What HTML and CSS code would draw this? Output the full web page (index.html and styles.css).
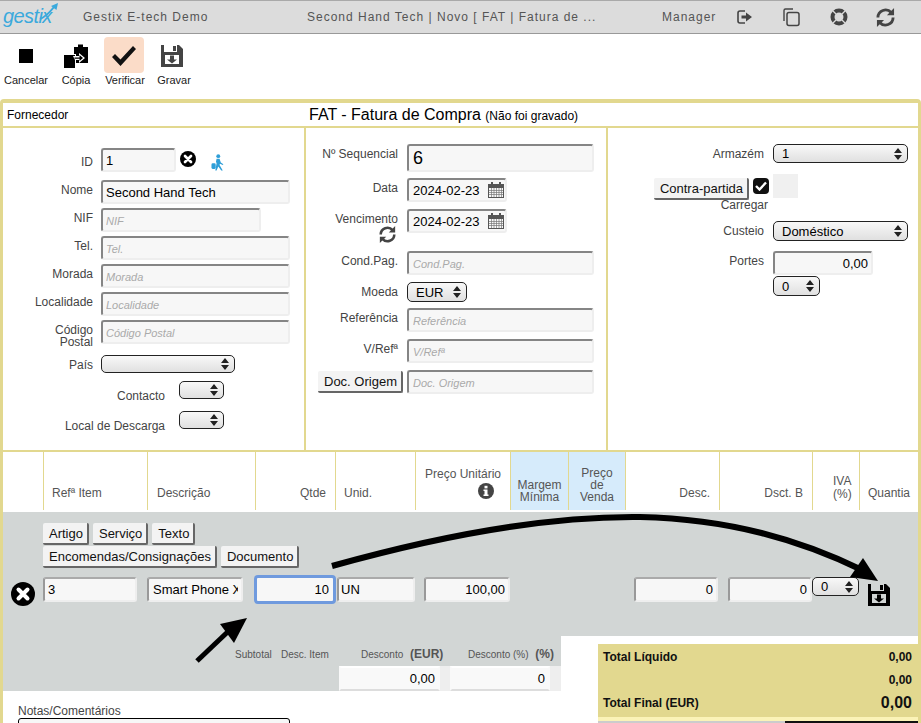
FILE: index.html
```html
<!DOCTYPE html>
<html lang="en">
<head>
    <meta charset="UTF-8">
    <meta name="viewport" content="width=device-width, initial-scale=1.0">
    <title>Gestix E-tech Demo</title>
    <link rel="stylesheet" href="styles.css">
</head>
<body>

    <svg class="defs" width="0" height="0">
        <symbol id="disk" viewBox="0 0 22 22">
            <path fill-rule="evenodd" d="M0 0H3V7H16V0H18L22 4V22H0ZM12 1H15V6H12ZM4 10V19H18V10ZM9 10.5H13V14.5H16L11 18.5L6 14.5H9Z"/>
        </symbol>
        <symbol id="cross" viewBox="0 0 24 24">
            <circle cx="12" cy="12" r="12"/>
            <path d="M7.5 7.5L16.5 16.5M16.5 7.5L7.5 16.5" stroke="#fff" stroke-width="4" stroke-linecap="round"/>
        </symbol>
        <symbol id="sync" viewBox="2 2 20 20">
            <path d="M4 12A8 8 0 0 1 18 6.8M20 12A8 8 0 0 1 6 17.2" fill="none" stroke="currentColor" stroke-width="3"/>
            <path d="M21 2V9.5H13.5ZM3 22V14.5H10.5Z" fill="currentColor"/>
        </symbol>
    </svg>

    <header class="topbar">
        <div class="logo">
            <span class="logo-text">gestix</span>
            <svg class="logo-arrow" width="20" height="18" viewBox="0 0 20 18"><path d="M1 16C6 14 11 9 15 4" fill="none" stroke="#3aa9dc" stroke-width="2"/><path d="M19 0L17.5 7L12 3Z" fill="#3aa9dc"/></svg>
        </div>
        <div class="company">Gestix E-tech Demo</div>
        <div class="doc-title">Second Hand Tech | Novo [ FAT | Fatura de ...</div>
        <div class="user">Manager</div>
        <div class="top-icons">
            <svg width="18" height="18" viewBox="0 0 18 18"><path d="M9 3H4Q2 3 2 5V13Q2 15 4 15H9" fill="none" stroke="#444" stroke-width="1.6"/><path d="M5.5 7.5H10V4.5L16 9L10 13.5V10.5H5.5Z" fill="#444"/></svg>
            <svg width="20" height="20" viewBox="0 0 20 20"><path d="M3 14V3.5Q3 2 4.500 2H12" fill="none" stroke="#444" stroke-width="1.4"/><rect x="6" y="5.500" width="12" height="13" rx="2" fill="none" stroke="#444" stroke-width="1.5"/></svg>
            <svg class="top-ring" width="20" height="20" viewBox="0 0 20 20"><circle cx="10" cy="10" r="6.500" fill="none" stroke="#444" stroke-width="4"/><path d="M3 3L7 7M17 3L13 7M3 17L7 13M17 17L13 13" stroke="#dcdcdc" stroke-width="1.300"/></svg>
            <svg class="top-sync" width="19" height="19"><use href="#sync"/></svg>
        </div>
    </header>

    <div class="toolbar">
        <div class="tool">
            <div class="tool-icon"><span class="stop"></span></div>
            <span>Cancelar</span>
        </div>
        <div class="tool">
            <div class="tool-icon">
                <svg width="24" height="24" viewBox="0 0 24 24"><path d="M10 3H14V0.500H19V3H24V19H12V10H10Z"/><path d="M0 11H11V24H0Z"/><path d="M9 12H15V9L21 14L15 19V16H11" fill="#fff"/><path d="M10.500 13.500H15.500V11L19 14L15.500 17V14.800H10.500Z"/></svg>
            </div>
            <span>Cópia</span>
        </div>
        <div class="tool">
            <div class="tool-icon active">
                <svg width="26" height="22" viewBox="0 0 26 22"><path d="M1 12L4 9L9.500 14.500L22 1L25 4L9.500 21Z" fill="#111"/></svg>
            </div>
            <span>Verificar</span>
        </div>
        <div class="tool">
            <div class="tool-icon"><svg class="disk-gray" width="22" height="22"><use href="#disk"/></svg></div>
            <span>Gravar</span>
        </div>
    </div>

    <main class="card">
        <div class="card-head">
            <span class="supplier-title">Fornecedor</span>
            <span class="doc-name">FAT - Fatura de Compra <small>(Não foi gravado)</small></span>
        </div>

        <div class="columns">
            <section class="col col-left">
                <div class="field field-id">
                    <label>ID</label>
                    <input class="w75" type="text" value="1">
                    <svg class="id-cross" width="16" height="16"><use href="#cross"/></svg>
                    <svg class="walker" width="14" height="17" viewBox="0 0 16 20"><circle cx="9.500" cy="2.500" r="2.300" fill="#2f9fd8"/><path d="M7.500 5.500H11L12.500 10L15.500 12L14.800 13L11.500 11.500L11 13L14.800 19.500H13L9.500 14.800L7.500 19.500H6L7.500 11L6.800 9Z" fill="#2f9fd8"/><rect x="1.500" y="11" width="5" height="6.500" rx="1.500" fill="#2f9fd8"/></svg>
                </div>
                <div class="field gap8"><label>Nome</label><input class="w189" type="text" value="Second Hand Tech"></div>
                <div class="field"><label>NIF</label><input class="w160" type="text" placeholder="NIF"></div>
                <div class="field"><label>Tel.</label><input class="w189" type="text" placeholder="Tel."></div>
                <div class="field"><label>Morada</label><input class="w189" type="text" placeholder="Morada"></div>
                <div class="field"><label>Localidade</label><input class="w189" type="text" placeholder="Localidade"></div>
                <div class="field"><label class="two-lines">Código Postal</label><input class="w189" type="text" placeholder="Código Postal"></div>
                <div class="field gap7"><label class="mid">País</label><select class="sel-pais"><option></option></select></div>
                <div class="field contact-row"><label>Contacto</label><select class="sel-small"><option></option></select></div>
                <div class="field contact-row discharge"><label>Local de Descarga</label><select class="sel-small"><option></option></select></div>
            </section>

            <section class="col col-mid">
                <div class="field seq-row"><label>Nº Sequencial</label><input class="w187 big" type="text" value="6"></div>
                <div class="field gap6"><label>Data</label><input class="w100 date" type="text" value="2024-02-23"></div>
                <div class="field gap7">
                    <label>Vencimento
                        <svg class="venc-sync" width="17" height="17"><use href="#sync"/></svg>
                    </label>
                    <input class="w100 date" type="text" value="2024-02-23">
                </div>
                <div class="field gap8"><label>Cond.Pag.</label><input class="w187" type="text" placeholder="Cond.Pag."></div>
                <div class="field gap7"><label class="mid">Moeda</label><select class="sel-moeda"><option>EUR</option></select></div>
                <div class="field gap6"><label>Referência</label><input class="w187" type="text" placeholder="Referência"></div>
                <div class="field gap7"><label>V/Refª</label><input class="w187" type="text" placeholder="V/Refª"></div>
                <div class="field gap7 doc-row"><button class="btn">Doc. Origem</button><input class="w187" type="text" placeholder="Doc. Origem"></div>
            </section>

            <section class="col col-right">
                <div class="field"><label class="mid">Armazém</label><select class="sel-wide"><option>1</option></select></div>
                <div class="contra">
                    <div class="contra-left">
                        <div class="contra-top">
                            <button class="btn">Contra-partida</button>
                            <span class="check"><svg width="12" height="10" viewBox="0 0 12 10"><path d="M1 5L4.500 8.500L11 1.500" fill="none" stroke="#fff" stroke-width="2.400"/></svg></span>
                        </div>
                        <span class="carregar">Carregar</span>
                    </div>
                    <span class="swatch"></span>
                </div>
                <div class="field custeio"><label class="mid">Custeio</label><select class="sel-wide"><option>Doméstico</option></select></div>
                <div class="field gap10"><label>Portes</label><input class="w100 num" type="text" value="0,00"></div>
                <div class="field portes-sel"><select class="sel-tax"><option>0</option></select></div>
            </section>
        </div>

        <div class="line-head">
            <div class="th"></div>
            <div class="th ref">Refª Item</div>
            <div class="th">Descrição</div>
            <div class="th right">Qtde</div>
            <div class="th">Unid.</div>
            <div class="th center">Preço Unitário
                <svg class="info" width="16" height="16" viewBox="0 0 16 16"><circle cx="8" cy="8" r="8" fill="#444"/><rect x="6.500" y="2.800" width="3" height="2.600" fill="#fff"/><path d="M5.500 6.500H9.500V11.500H10.500V13H5.500V11.500H6.500V8H5.500Z" fill="#fff"/></svg>
            </div>
            <div class="th center blue">Margem Mínima</div>
            <div class="th center blue">Preço de Venda</div>
            <div class="th right">Desc.</div>
            <div class="th right">Dsct. B</div>
            <div class="th right tight">IVA (%)</div>
            <div class="th">Quantia</div>
        </div>

        <div class="line-edit">
            <div class="tabs">
                <button class="btn">Artigo</button>
                <button class="btn">Serviço</button>
                <button class="btn">Texto</button>
            </div>
            <div class="tabs">
                <button class="btn">Encomendas/Consignações</button>
                <button class="btn">Documento</button>
            </div>
            <div class="line-row">
                <svg class="line-cross" width="24" height="24"><use href="#cross"/></svg>
                <input class="cell c-ref" type="text" value="3">
                <input class="cell c-desc" type="text" value="Smart Phone XS">
                <input class="cell c-qty num focus" type="text" value="10">
                <input class="cell c-unit" type="text" value="UN">
                <input class="cell c-price num" type="text" value="100,00">
                <input class="cell c-disc num" type="text" value="0">
                <input class="cell c-disc2 num" type="text" value="0">
                <select class="sel-tax c-tax"><option>0</option></select>
                <svg class="line-save" width="22" height="22"><use href="#disk"/></svg>
            </div>
        </div>

        <div class="foot">
            <div class="foot-left">
                <div class="subtotals">
                    <div class="sub-labels">
                        <span class="s-sub">Subtotal</span>
                        <span class="s-item">Desc. Item</span>
                        <span class="s-eur">Desconto <b>(EUR)</b></span>
                        <span class="s-pct">Desconto (%) <b>(%)</b></span>
                    </div>
                    <div class="sub-inputs">
                        <div class="sub-box"><input class="cell num" type="text" value="0,00"></div>
                        <div class="sub-box"><input class="cell num" type="text" value="0"></div>
                    </div>
                </div>
                <div class="notes">
                    <label>Notas/Comentários</label>
                    <textarea></textarea>
                </div>
            </div>
            <div class="foot-right">
                <div class="totals">
                    <div class="total-row"><span>Total Líquido</span><span>0,00</span></div>
                    <div class="total-row"><span></span><span>0,00</span></div>
                    <div class="total-row final"><span>Total Final (EUR)</span><span class="grand">0,00</span></div>
                </div>
                <div class="totals-strip"></div>
                <div class="totals-under"><span></span></div>
            </div>
        </div>
    </main>

    <!-- arrows drawn over the screenshot -->
    <svg class="arrows" width="921" height="723" viewBox="0 0 921 723">
        <path d="M332 566C450 533 555 516 640 517C730 519 800 540 862 570" fill="none" stroke="#000" stroke-width="6"/>
        <path d="M863 558L878 581L850 577Z"/>
        <path d="M197 661L236 624" fill="none" stroke="#000" stroke-width="5"/>
        <path d="M247 618L220 624L234 643Z"/>
    </svg>

</body>
</html>
```

FILE: styles.css
```css
* {
    box-sizing: border-box;
}
html, body {
    margin: 0;
    height: 723px;
    overflow: hidden;
}
body {
    position: relative;
    font-family: "Liberation Sans", Arial, sans-serif;
    font-size: 12px;
    color: #444;
    background-color: #fff;
}
.defs {
    position: absolute;
}
.arrows {
    position: absolute;
    left: 0;
    top: 0;
    pointer-events: none;
}

/* top bar */
.topbar {
    display: flex;
    align-items: center;
    height: 34px;
    background-color: #dcdcdc;
    border-top: 1px solid #a9a9a9;
    border-bottom: 1px solid #999;
    letter-spacing: 1px;
    color: #555;
}
.logo {
    position: relative;
    width: 83px;
    padding-left: 3px;
    margin-top: -2px;
}
.logo-text {
    font-size: 20px;
    font-style: italic;
    letter-spacing: -0.6px;
    color: #3aa9dc;
}
.logo-arrow {
    position: absolute;
    left: 39px;
    top: -2px;
}
.company {
    width: 224px;
}
.doc-title {
    width: 355px;
}
.user {
    width: 72px;
}
.top-icons {
    display: flex;
    align-items: center;
    gap: 27px;
    padding-left: 2px;
}
.top-ring {
    margin-left: 1px;
}
.top-sync {
    color: #444;
}

/* toolbar */
.toolbar {
    display: flex;
    gap: 8px;
    height: 65px;
    padding: 3px 0 0 4px;
}
.tool {
    width: 40px;
    font-size: 11px;
    color: #222;
    text-align: center;
    display: flex;
    flex-direction: column;
    align-items: center;
    white-space: nowrap;
}
.tool:first-child {
    width: 44px;
}
.tool:nth-child(3) span {
    margin-left: 2px;
}
.tool:nth-child(4) span {
    margin-left: 4px;
}
.tool-icon {
    display: flex;
    align-items: center;
    justify-content: center;
    width: 40px;
    height: 36px;
    margin-bottom: 1px;
    border-radius: 4px;
    padding-top: 1px;
}
.tool-icon + span {
    line-height: 13px;
}
.tool-icon.active {
    background-color: #fbdcc8;
}
.stop {
    display: block;
    width: 14px;
    height: 14px;
    margin-top: 1px;
    background-color: #000;
}
.disk-gray {
    color: #444;
    fill: #444;
}

/* card */
.card {
    height: 624px;
    overflow: hidden;
    border: 3px solid #e2d88f;
    border-top-width: 4px;
    border-bottom: none;
    border-radius: 4px 4px 0 0;
}
.card-head {
    display: flex;
    align-items: center;
    height: 25px;
    border-bottom: 2px solid #e2d88f;
    color: #000;
}
.supplier-title {
    width: 306px;
    padding-left: 4px;
}
.doc-name {
    font-size: 16px;
}
.doc-name small {
    font-size: 12px;
}

.columns {
    display: grid;
    grid-template-columns: 303px 302px 310px;
    height: 324px;
    border-bottom: 2px solid #e2d88f;
}
.col {
    border-right: 2px solid #e2d88f;
}
.col-left {
    padding-top: 20px;
}
.col-mid {
    padding-top: 16px;
}
.col-right {
    padding-top: 16px;
    border-right: none;
}

.field {
    display: flex;
    align-items: flex-start;
    gap: 8px;
    margin-top: 4px;
}
.field:first-child {
    margin-top: 0;
}
.field label {
    flex: none;
    width: 90px;
    padding-top: 3px;
    line-height: 14px;
    text-align: right;
}
.field label.two-lines {
    padding: 4px 0 0 45px;
    line-height: 12px;
}
.field-id label {
    padding-top: 7px;
}
.col-mid .field {
    gap: 9px;
}
.col-mid .field label {
    width: 92px;
}
.col-mid input[type="text"] {
    padding-left: 4px;
}
.col-right .field {
    gap: 9px;
}
.col-right .field label {
    width: 156px;
}
.gap6 { margin-top: 6px; }
.gap7 { margin-top: 7px; }
.gap8 { margin-top: 8px; }
.gap10 { margin-top: 10px; }

input[type="text"] {
    height: 24px;
    padding: 0 3px;
    font-family: inherit;
    font-size: 13px;
    color: #000;
    background-color: #f7f7f7;
    border: 2px solid;
    border-color: #858585 #eee #eee #858585;
    border-radius: 3px;
    outline: none;
}
input::placeholder {
    font-size: 11px;
    font-style: italic;
    color: #aaa;
}
.w75 { width: 75px; }
.w100 { width: 100px; }
.w160 { width: 160px; }
.w187 { width: 187px; }
.w189 { width: 189px; }
input.big {
    height: 28px;
    font-size: 18px;
}
input.num {
    text-align: right;
}
input.date {
    background-image: url("data:image/svg+xml,%3Csvg xmlns='http://www.w3.org/2000/svg' width='16' height='16' viewBox='0 0 16 16'%3E%3Cpath fill='%23555' fill-rule='evenodd' d='M3 0H5V2H11V0H13V2H16V16H0V2H3ZM1 6V15H15V6Z'/%3E%3Cpath stroke='%23777' stroke-width='.7' d='M1 8.500H15M1 10.500H15M1 12.500H15M3.500 6V15M6 6V15M8.500 6V15M11 6V15M13.500 6V15'/%3E%3C/svg%3E");
    background-repeat: no-repeat;
    background-position: right 1px center;
}
select {
    height: 19px;
    padding: 0 0 0 8px;
    font-family: inherit;
    font-size: 13px;
    color: #000;
    appearance: none;
    -webkit-appearance: none;
    border: 1px solid #222;
    border-radius: 5px;
    background-color: #eee;
    background-image: url("data:image/svg+xml,%3Csvg xmlns='http://www.w3.org/2000/svg' width='8' height='12' viewBox='0 0 8 12'%3E%3Cpath fill='%23222' d='M4 0L8 5H0ZM4 12L0 7H8Z'/%3E%3C/svg%3E"), linear-gradient(#f8f8f8, #e0e0e0);
    background-repeat: no-repeat;
    background-position: right 5px center, 0 0;
}
.sel-pais { width: 134px; height: 18px; }
.sel-small { width: 45px; height: 18px; }
.sel-moeda { width: 60px; height: 20px; }
.sel-wide { width: 135px; }
.sel-tax { width: 47px; height: 20px; }
.custeio select {
    height: 20px;
}

.id-cross {
    margin: 3px 0 0 -4px;
}
.walker {
    margin: 6px 0 0 6px;
}
.contact-row {
    margin-top: 8px;
    gap: 14px;
}
.field.contact-row label {
    width: 162px;
    padding-top: 8px;
}
.contact-row.discharge {
    margin-top: 8px;
}
.venc-sync {
    display: block;
    margin: 0 0 0 auto;
    color: #444;
    position: relative;
    left: -2px;
}

.btn {
    height: 22px;
    padding: 0 4px 0 6px;
    font-family: inherit;
    font-size: 13px;
    color: #111;
    background-color: #f3f3f3;
    border: none;
    border-right: 2px solid #666;
    border-bottom: 2px solid #666;
    border-radius: 2px;
}
.doc-row {
    align-items: center;
    padding-left: 12px;
}
.col-mid .doc-row.field {
    gap: 4px;
}

.contra {
    display: flex;
    gap: 4px;
    margin-top: 11px;
}
.contra-left {
    display: flex;
    flex-direction: column;
    align-items: flex-end;
    width: 161px;
}
.contra-top {
    display: flex;
    gap: 4px;
    margin-top: 4px;
}
.check {
    display: flex;
    align-items: center;
    justify-content: center;
    width: 16px;
    height: 16px;
    background-color: #111;
    border-radius: 4px;
}
.carregar {
    line-height: 14px;
    margin: -2px 1px 0 0;
}
.swatch {
    width: 25px;
    height: 24px;
    background-color: #f0f0f0;
}
.custeio {
    margin-top: 9px;
}
.portes-sel {
    margin-top: 1px;
    padding-left: 165px;
}

/* lines table */
.line-head {
    display: grid;
    grid-template-columns: 40px 104px 108px 80px 80px 95px 58px 57px 94px 93px 47px 59px;
    height: 60px;
    padding-bottom: 2px;
}
.th {
    display: flex;
    flex-direction: column;
    justify-content: flex-end;
    padding: 0 9px 11px 8px;
    line-height: 12px;
    border-left: 1px solid #e2d88f;
    color: #555;
}
.th:first-child {
    border-left: none;
}
.th:nth-child(3) {
    padding-left: 9px;
}
.th.right {
    text-align: right;
}
.th.center {
    text-align: center;
    padding-left: 4px;
    padding-right: 4px;
}
.th.blue {
    padding-bottom: 7px;
    background-color: #d6ebfb;
}
.th.tight {
    padding: 0 8px 9px 20px;
    line-height: 13px;
}
.th .info {
    display: block;
    margin: 3px 12px 0 auto;
}

.line-edit {
    height: 124px;
    padding-top: 11px;
    background-color: #d2d6d5;
}
.tabs {
    display: flex;
    gap: 4px;
    margin: 0 0 1px 40px;
}
.line-row {
    display: flex;
    align-items: flex-start;
    margin-top: 9px;
}
.line-cross {
    margin: 5px 8px 0 8px;
}
input.cell {
    height: 25px;
    border-color: #aaa #eee #eee #999;
}
.c-ref { width: 94px; }
input.c-desc { width: 96px; margin-left: 10px; padding-left: 4px; }
input.c-qty {
    width: 82px;
    height: 29px;
    margin: -2px 1px 0 11px;
    padding-right: 4px;
    border: 3px solid #6f9ade;
    border-radius: 4px;
}
input.c-unit { width: 78px; padding-left: 2px; }
.c-price { width: 86px; margin-left: 9px; }
.c-disc { width: 84px; margin-left: 124px; }
.c-disc2 { width: 84px; margin-left: 10px; }
select.c-tax { width: 47px; height: 19px; }
.line-save {
    margin: 7px 0 0 9px;
    color: #000;
}

/* footer */
.foot {
    display: flex;
}
.foot-left {
    width: 558px;
}
.subtotals {
    height: 55px;
    background-color: #d2d6d5;
}
.sub-labels {
    position: relative;
    height: 30px;
    font-size: 10px;
    color: #555;
}
.sub-labels span {
    position: absolute;
    top: 13px;
    white-space: nowrap;
}
.sub-labels b {
    font-size: 12px;
    margin-left: 4px;
}
.s-sub { left: 232px; }
.s-item { left: 278px; }
.sub-labels .s-eur { left: 358px; top: 11px; }
.sub-labels .s-pct { left: 465px; top: 11px; }
.sub-inputs {
    display: flex;
    padding-left: 336px;
}
.sub-box {
    width: 111px;
    height: 25px;
    padding-right: 10px;
    background-color: #eee;
}
.sub-box:last-child {
    padding-right: 11px;
}
.sub-box input.cell {
    width: 100%;
    height: 25px;
    background-color: #f9f9f9;
    border-color: #fff #f9f9f9 #ddd #f9f9f9;
    border-radius: 0;
}
.notes {
    padding: 13px 0 0 15px;
}
.notes label {
    display: block;
    line-height: 14px;
}
.notes textarea {
    display: block;
    width: 272px;
    height: 30px;
    border: 1px solid #000;
    border-radius: 3px;
    background-color: #f7f7f7;
}
.foot-right {
    flex: 1;
    padding: 8px 0 0 37px;
}
.totals {
    padding-top: 1px;
    height: 73px;
    background-color: #e2d88f;
    color: #111;
    font-weight: bold;
}
.total-row {
    display: flex;
    justify-content: space-between;
    align-items: center;
    height: 23px;
    padding: 0 6px 0 5px;
}
.grand {
    font-size: 16px;
}
.totals-strip {
    height: 4px;
    background-color: #fbf3b8;
}
.totals-under {
    height: 2px;
    background-color: #ccc;
    padding-left: 187px;
}
.totals-under span {
    display: block;
    height: 2px;
    background-color: #111;
}
```
